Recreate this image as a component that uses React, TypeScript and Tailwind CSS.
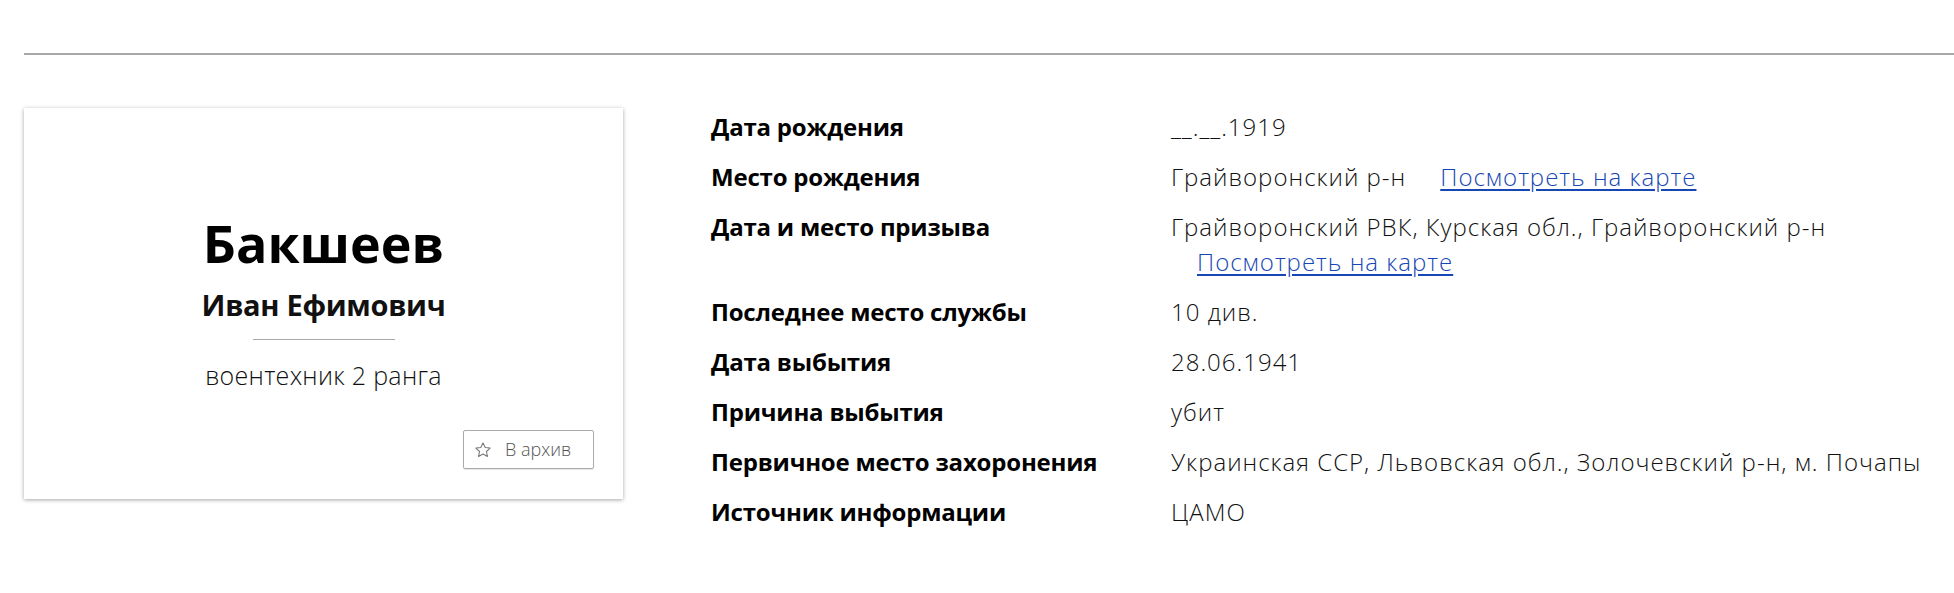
const rows: { label: string; value: string; link?: "inline" | "below" }[] = [
  { label: "Дата рождения", value: "__.__.1919" },
  { label: "Место рождения", value: "Грайворонский р-н", link: "inline" },
  { label: "Дата и место призыва", value: "Грайворонский РВК, Курская обл., Грайворонский р-н", link: "below" },
  { label: "Последнее место службы", value: "10 див." },
  { label: "Дата выбытия", value: "28.06.1941" },
  { label: "Причина выбытия", value: "убит" },
  { label: "Первичное место захоронения", value: "Украинская ССР, Львовская обл., Золочевский р-н, м. Почапы" },
  { label: "Источник информации", value: "ЦАМО" },
];

const StarIcon = () => (
  <svg width="18" height="18" viewBox="0 0 24 24" fill="none" stroke="#777" strokeWidth="1.4" strokeLinejoin="round">
    <path d="M12 2.5l2.9 6.1 6.6.8-4.9 4.6 1.3 6.6L12 17.3l-5.9 3.3 1.3-6.6-4.9-4.6 6.6-.8z" />
  </svg>
);

const MapLink = ({ className = "" }: { className?: string }) => (
  <a href="#" className={`text-[#1747b5] underline underline-offset-[3px] ${className}`}>
    Посмотреть на карте
  </a>
);

const PersonCard = () => (
  <div className="w-[599px] h-[391px] shrink-0 bg-white shadow-[0_1px_4px_rgba(0,0,0,0.35)] flex flex-col items-center pt-[107px] px-[29px]">
    <h1 className="text-[52px] leading-[56px] font-bold text-black">Бакшеев</h1>
    <h2 className="mt-[17px] text-[29px] leading-[34px] font-bold text-[#111] tracking-[-0.3px]">Иван Ефимович</h2>
    <div className="mt-[17px] h-px w-[142px] bg-[#aaa]" />
    <p className="mt-[21px] text-[25px] leading-[28px] font-light text-[#111] tracking-[0.3px]">воентехник 2 ранга</p>
    <button className="mt-[41px] self-end w-[131px] h-[39px] border border-[#aaa] rounded-[2px] shadow-[0_1px_1px_rgba(0,0,0,0.1)] flex items-center pl-[10px] gap-[13px] text-[18px] font-light text-[#555]">
      <StarIcon />
      В архив
    </button>
  </div>
);

export default function App() {
  return (
    <div className="min-h-screen bg-white font-['Open_Sans',sans-serif] text-black">
      <div className="pt-[53px] pl-[24px]">
        <div className="h-[2px] bg-[#a9a9a9]" />
      </div>
      <div className="flex pt-[53px] pl-[24px] gap-[88px]">
        <PersonCard />
        <dl className="flex flex-col gap-[15px] pt-[1px]">
          {rows.map((r) => (
            <div key={r.label} className="flex">
              <dt className="w-[460px] shrink-0 text-[24px] leading-[35px] font-bold tracking-[-0.2px]">{r.label}</dt>
              <dd className="text-[24px] leading-[35px] font-light text-[#111] tracking-[1px]">
                {r.value}
                {r.link === "inline" && <MapLink className="ml-[34px]" />}
                {r.link === "below" && (
                  <div className="pl-[26px]">
                    <MapLink />
                  </div>
                )}
              </dd>
            </div>
          ))}
        </dl>
      </div>
    </div>
  );
}
